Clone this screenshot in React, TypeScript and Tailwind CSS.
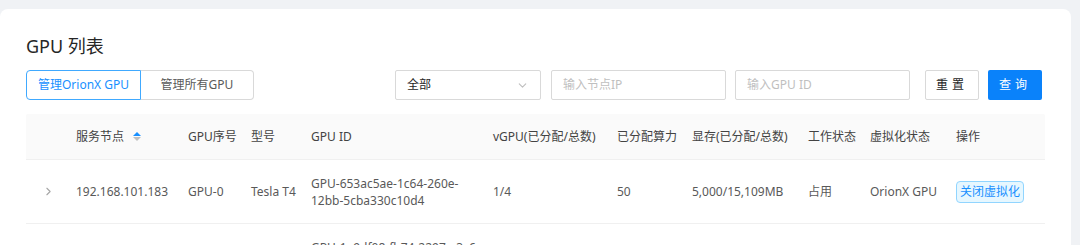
import { FC, ReactElement } from "react";
import { FiChevronDown, FiChevronRight } from "react-icons/fi";

const cols =
  "grid grid-cols-[50px_112px_63px_60px_182px_124px_75px_116px_62px_86px_1fr]";

type TRow = {
  node: string;
  index: string;
  model: string;
  id: string[];
  vgpu: string;
  power: string;
  memory: string;
  work: string;
  virt: string;
};

const rows: TRow[] = [
  {
    node: "192.168.101.183",
    index: "GPU-0",
    model: "Tesla T4",
    id: ["GPU-653ac5ae-1c64-260e-", "12bb-5cba330c10d4"],
    vgpu: "1/4",
    power: "50",
    memory: "5,000/15,109MB",
    work: "占用",
    virt: "OrionX GPU",
  },
  {
    node: "192.168.101.183",
    index: "GPU-1",
    model: "Tesla T4",
    id: ["GPU-1a9df08-fb74-2297-a3c6", "-8e1f2bd04c71"],
    vgpu: "0/4",
    power: "0",
    memory: "0/15,109MB",
    work: "空闲",
    virt: "OrionX GPU",
  },
];

const SortIcon: FC = () => (
  <span className="ml-[9px] flex flex-col gap-[1px]">
    <svg width="8" height="4" viewBox="0 0 8 4">
      <path d="M4 0 L8 4 L0 4 Z" fill="#1890ff" />
    </svg>
    <svg width="8" height="4" viewBox="0 0 8 4">
      <path d="M0 0 L8 0 L4 4 Z" fill="#bfbfbf" />
    </svg>
  </span>
);

export default function App(): ReactElement {
  return (
    <main
      className="h-[245px] w-[1080px] overflow-hidden bg-[#f0f2f5] pt-[9px] text-[12px] text-[#595959]"
      style={{ fontFamily: '"Noto Sans", "Noto Sans CJK SC", sans-serif' }}
    >
      <section className="w-[1071px] rounded-lg bg-white px-[26px] pt-[24px]">
        {/* Title */}
        <h1 className="text-[18px] leading-[26px] text-[#262626]">GPU 列表</h1>

        {/* Toolbar */}
        <div className="mt-[11px] flex h-[30px] items-center">
          <div className="flex h-[30px]">
            <button className="h-full w-[115px] rounded-l-[4px] border border-[#40a9ff] text-[#1890ff]">
              管理OrionX GPU
            </button>
            <button className="h-full w-[113px] rounded-r-[4px] border border-l-0 border-[#d9d9d9] text-[#595959]">
              管理所有GPU
            </button>
          </div>

          <div className="ml-[141px] flex h-[30px] w-[146px] items-center justify-between rounded-[2px] border border-[#d9d9d9] pl-[11px] pr-[11px]">
            <span className="text-[#262626]">全部</span>
            <FiChevronDown className="text-[#bfbfbf]" size={13} />
          </div>
          <div className="ml-[10px] flex h-[30px] w-[175px] items-center rounded-[2px] border border-[#d9d9d9] px-[11px] text-[#bfbfbf]">
            输入节点IP
          </div>
          <div className="ml-[9px] flex h-[30px] w-[175px] items-center rounded-[2px] border border-[#d9d9d9] px-[11px] text-[#bfbfbf]">
            输入GPU ID
          </div>
          <button className="ml-[15px] h-[30px] w-[54px] rounded-[2px] border border-[#d9d9d9] tracking-[4px] text-[#262626]">
            重置
          </button>
          <button className="ml-[9px] h-[30px] w-[54px] rounded-[2px] bg-[#0a82fa] tracking-[4px] text-white">
            查询
          </button>
        </div>

        {/* Table */}
        <div className="mt-[14px]">
          <div
            className={`${cols} h-[46px] items-center rounded-t-[2px] border-b border-[#f0f0f0] bg-[#fafafa] text-[#434343]`}
          >
            <span />
            <span className="flex items-center">
              服务节点
              <SortIcon />
            </span>
            <span>GPU序号</span>
            <span>型号</span>
            <span>GPU ID</span>
            <span>vGPU(已分配/总数)</span>
            <span>已分配算力</span>
            <span>显存(已分配/总数)</span>
            <span>工作状态</span>
            <span>虚拟化状态</span>
            <span>操作</span>
          </div>

          {rows.map((row, index) => (
            <div
              key={index}
              className={`${cols} h-[64px] items-center border-b border-[#f0f0f0] text-[#595959]`}
            >
              <span className="pl-[16px] text-[#a6a6a6]">
                <FiChevronRight size={13} />
              </span>
              <span>{row.node}</span>
              <span>{row.index}</span>
              <span>{row.model}</span>
              <span className="leading-[17px]">
                {row.id[0]}
                <br />
                {row.id[1]}
              </span>
              <span>{row.vgpu}</span>
              <span>{row.power}</span>
              <span>{row.memory}</span>
              <span>{row.work}</span>
              <span>{row.virt}</span>
              <span>
                <span className="inline-flex h-[22px] items-center rounded-[4px] border border-[#91d5ff] bg-[#e6f7ff] px-[3px] text-[#1890ff]">
                  关闭虚拟化
                </span>
              </span>
            </div>
          ))}
        </div>
      </section>
    </main>
  );
}
